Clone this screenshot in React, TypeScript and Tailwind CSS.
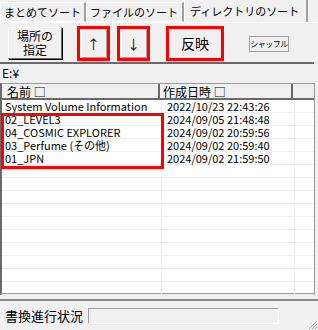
import React from "react";

const ROWS = [
  { name: "System Volume Information", date: "2022/10/23 22:43:26" },
  { name: "02_LEVEL3", date: "2024/09/05 21:48:48" },
  { name: "04_COSMIC EXPLORER", date: "2024/09/02 20:59:56" },
  { name: "03_Perfume (その他)", date: "2024/09/02 20:59:40" },
  { name: "01_JPN", date: "2024/09/02 21:59:50" },
];

const FILLER = 10;

function Tab({ label, active, w }: { label: string; active?: boolean; w: string }) {
  return (
    <div
      className={
        active
          ? `${w} h-[23px] whitespace-nowrap border-t border-l border-white border-r-2 border-r-[#a0a0a0] bg-[#f0f0f0] px-[5px] pt-[4px] text-[11px] leading-[14px]`
          : `${w} h-[20px] whitespace-nowrap border-t border-l border-white border-r-2 border-r-[#a0a0a0] border-b border-b-white px-[3px] pt-[2px] text-[11px] leading-[14px]`
      }
    >
      {label}
    </div>
  );
}

function WinButton({ children, className }: { children: React.ReactNode; className: string }) {
  return (
    <div
      className={`${className} flex items-center justify-center border border-t-white border-l-white border-r-[#696969] border-b-[#696969] bg-[#f0f0f0] shadow-[1px_1px_0_#000]`}
    >
      {children}
    </div>
  );
}

function RedBox({ children, className }: { children: React.ReactNode; className: string }) {
  return (
    <div className={`${className} flex items-center justify-center border-[3px] border-[#ff0000]`}>
      {children}
    </div>
  );
}

export default function App() {
  return (
    <div
      className="relative h-[330px] w-[318px] overflow-hidden bg-[#f0f0f0] text-[12px] text-black"
      style={{ fontFamily: '"Noto Sans CJK JP", "Noto Sans", sans-serif' }}
    >
      {/* tabs */}
      <div className="flex h-[23px] items-end border-b border-white">
        <Tab label="まとめてソート" w="w-[86px]" />
        <Tab label="ファイルのソート" w="w-[98px]" />
        <Tab label="ディレクトリのソート" w="w-[124px]" active />
      </div>

      {/* controls */}
      <div className="flex h-[39px] items-start pt-[3px]">
        <WinButton className="ml-[8px] mt-[1px] h-[32px] w-[54px] flex-col text-[12px] leading-[14px]">
          <span>場所の</span>
          <span>指定</span>
        </WinButton>
        <RedBox className="ml-[15px] h-[35px] w-[33px]">
          <WinButton className="h-[28px] w-[26px] border-b-[#a0a0a0] border-r-[#a0a0a0] text-[13px] shadow-none">↑</WinButton>
        </RedBox>
        <RedBox className="ml-[7px] h-[35px] w-[33px]">
          <WinButton className="h-[28px] w-[26px] border-b-[#a0a0a0] border-r-[#a0a0a0] text-[13px] shadow-none">↓</WinButton>
        </RedBox>
        <RedBox className="ml-[16px] h-[35px] w-[58px] text-[14px]">反映</RedBox>
        <div className="ml-[25px] mt-[10px] flex h-[16px] w-[40px] items-center justify-center whitespace-nowrap border border-[#a0a0a0] text-[8px] tracking-[-0.5px]">
          シャッフル
        </div>
      </div>

      {/* path */}
      <div className="mr-[4px] h-[19px] border-t-2 border-[#696969] bg-[#f0f0f0] pl-[2px] pt-[1px] text-[12px] leading-[15px]">
        E:¥
      </div>

      {/* list */}
      <div className="relative mr-[3px] mt-[2px] h-[212px] border-l-2 border-t border-b-2 border-r border-[#9a9a9a] border-l-[#696969] bg-white">
        <div className="flex h-[16px] border-b-2 border-[#696969] bg-[#f0f0f0] text-[12px] leading-[15px]">
          <div className="w-[158px] whitespace-nowrap border-r-2 border-[#696969] pl-[5px]">名前 □</div>
          <div className="w-[133px] whitespace-nowrap border-r-2 border-[#696969] pl-[3px]">作成日時 □</div>
          <div className="flex-1" />
        </div>
        {ROWS.map((r) => (
          <div key={r.name} className="flex h-[13px] border-b border-[#ececec] text-[11px] leading-[13px]">
            <div className="w-[160px] whitespace-nowrap border-r border-[#ececec] pl-[3px]">{r.name}</div>
            <div className="w-[133px] whitespace-nowrap border-r border-[#ececec] pl-[5px]">{r.date}</div>
            <div className="flex-1" />
          </div>
        ))}
        {Array.from({ length: FILLER }).map((_, i) => (
          <div key={i} className="flex h-[13px] border-b border-[#ececec]">
            <div className="w-[160px] border-r border-[#ececec]" />
            <div className="w-[133px] border-r border-[#ececec]" />
            <div className="flex-1" />
          </div>
        ))}
        <div className="absolute left-[-1px] top-[29px] h-[56px] w-[163px] border-[3px] border-[#ff0000]" />
      </div>

      {/* status */}
      <div className="mt-[4px] border-t-2 border-[#8a8a8a]">
        <div className="flex items-center pl-[5px] pt-[7px]">
          <span className="whitespace-nowrap text-[13px] leading-[16px]">書換進行状況</span>
          <div className="ml-[5px] h-[16px] w-[191px] border border-t-[#a0a0a0] border-l-[#a0a0a0] border-r-white border-b-white" />
        </div>
      </div>
      <svg className="absolute bottom-0 right-0" width="12" height="12" viewBox="0 0 12 12">
        <path d="M11 3 L3 11 M11 6 L6 11 M11 9 L9 11" stroke="#a0a0a0" strokeWidth="1" />
      </svg>
    </div>
  );
}
